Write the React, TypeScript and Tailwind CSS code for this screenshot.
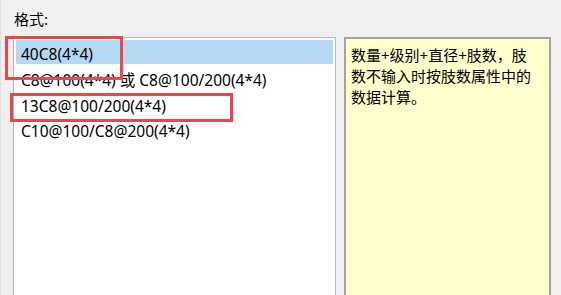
import React from 'react';

const items = ['40C8(4*4)', 'C8@100(4*4) 或 C8@100/200(4*4)', '13C8@100/200(4*4)', 'C10@100/C8@200(4*4)'];

const App = () => {
    const font = { fontFamily: '"Noto Sans", "Noto Sans CJK SC", sans-serif' };
    return (
        <div className="relative h-screen w-full overflow-hidden bg-[#f0f0f0] border-l border-[#dedede] text-black" style={font}>
            <div className="pl-[13px] pt-[9px] text-[15px] leading-[20px] h-[37px]">格式:</div>
            <div className="flex gap-[8px] pl-[12px]">
                <div className="w-[323px] h-[270px] border border-[#b9b9b9] bg-white p-[2px]">
                    {items.map((item, i) => (
                        <div
                            key={item}
                            className={
                                i === 0
                                    ? 'h-[24px] mb-[2px] pt-[2px] leading-[25px] pl-[5px] text-[15.5px] whitespace-nowrap bg-[#b5d8f4]'
                                    : 'h-[25.7px] pt-[2px] leading-[25px] pl-[5px] text-[15.5px] whitespace-nowrap'
                            }
                        >
                            {item}
                        </div>
                    ))}
                </div>
                <div className="w-[207px] h-[270px] border-2 border-[#a3a3a3] bg-[#ffffcd] pl-[5px] pt-[6px] text-[15px] leading-[21px]">
                    数量+级别+直径+肢数，肢<br />
                    数不输入时按肢数属性中的<br />
                    数据计算。
                </div>
            </div>

            {/* annotation boxes */}
            <div className="absolute left-[4px] top-[36px] w-[118px] h-[44px] border-[3px] border-[#e84848]" />
            <div className="absolute left-[9px] top-[93px] w-[223px] h-[29px] border-[3px] border-[#e84848]" />
        </div>
    );
};

export default App;
